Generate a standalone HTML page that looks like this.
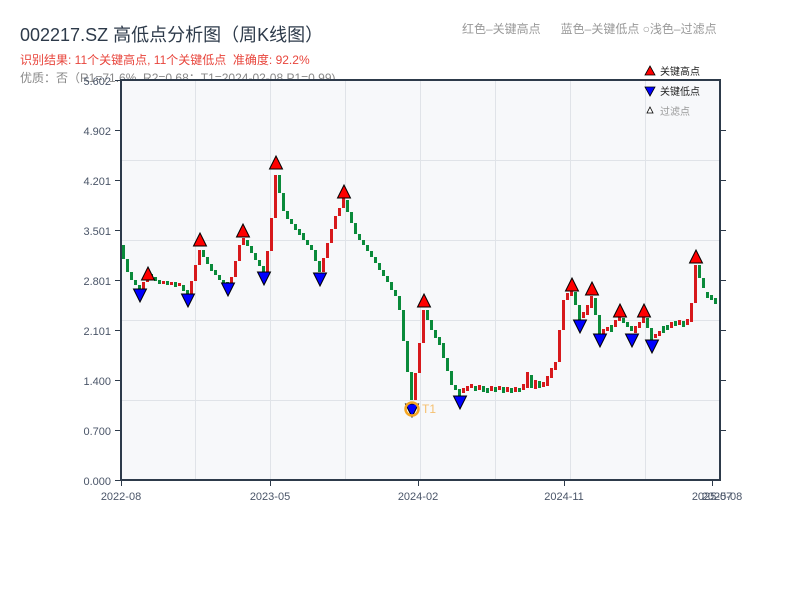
<!DOCTYPE html>
<html><head><meta charset="utf-8">
<style>
body{margin:0;background:#fff;width:800px;height:600px;overflow:hidden;font-family:"Liberation Sans","Noto Sans CJK SC",sans-serif;}
.t{position:absolute;white-space:nowrap}
.r{fill:#d7191c}.g{fill:#0a8a3a}
</style></head><body>
<div class="t" style="left:20px;top:21px;font-size:18px;color:#2d3a4a">002217.SZ 高低点分析图（周K线图）</div>
<div class="t" style="left:20px;top:51px;font-size:12px;color:#e8453c">识别结果: 11个关键高点, 11个关键低点&nbsp;&nbsp;准确度: 92.2%</div>
<div class="t" style="left:20px;top:69px;font-size:12px;color:#888">优质：否（R1=71.6%, R2=0.68；T1=2024-02-08 P1=0.99)</div>
<div class="t" style="left:462px;top:20px;font-size:12px;color:#999">红色–关键高点&nbsp;&nbsp;&nbsp;&nbsp;&nbsp;&nbsp;蓝色–关键低点 ○浅色–过滤点</div>
<svg width="800" height="600" style="position:absolute;left:0;top:0" xmlns="http://www.w3.org/2000/svg" font-family="Liberation Sans, Noto Sans CJK SC, sans-serif">
<rect x="121" y="80" width="599" height="400" fill="#f7f8fa"/>
<g stroke="#e0e3e8" stroke-width="1">
<line x1="121" x2="720" y1="160.5" y2="160.5"/><line x1="121" x2="720" y1="240.5" y2="240.5"/><line x1="121" x2="720" y1="320.5" y2="320.5"/><line x1="121" x2="720" y1="400.5" y2="400.5"/>
<line x1="195.5" x2="195.5" y1="80" y2="480"/><line x1="270.5" x2="270.5" y1="80" y2="480"/><line x1="345.5" x2="345.5" y1="80" y2="480"/><line x1="420.5" x2="420.5" y1="80" y2="480"/><line x1="495.5" x2="495.5" y1="80" y2="480"/><line x1="570.5" x2="570.5" y1="80" y2="480"/><line x1="645.5" x2="645.5" y1="80" y2="480"/>
</g>
<g>
<rect class="g" x="122" y="245" width="3" height="14"/>
<rect class="g" x="126" y="259" width="3" height="13"/>
<rect class="g" x="130" y="272" width="3" height="8"/>
<rect class="g" x="134" y="280" width="3" height="5"/>
<rect class="g" x="138" y="285" width="3" height="5"/>
<rect class="r" x="142" y="282" width="3" height="8"/>
<rect class="r" x="146" y="274" width="3" height="8"/>
<rect class="g" x="150" y="274" width="3" height="5"/>
<rect class="g" x="154" y="277" width="3" height="4"/>
<rect class="g" x="158" y="280" width="3" height="4"/>
<rect class="r" x="162" y="281" width="3" height="3"/>
<rect class="g" x="166" y="281" width="3" height="4"/>
<rect class="r" x="170" y="282" width="3" height="3"/>
<rect class="g" x="174" y="282" width="3" height="5"/>
<rect class="r" x="178" y="283" width="3" height="3"/>
<rect class="g" x="182" y="285" width="3" height="6"/>
<rect class="g" x="186" y="290" width="3" height="7"/>
<rect class="r" x="190" y="281" width="3" height="15"/>
<rect class="r" x="194" y="265" width="3" height="16"/>
<rect class="r" x="198" y="250" width="3" height="15"/>
<rect class="g" x="202" y="250" width="3" height="7"/>
<rect class="g" x="206" y="257" width="3" height="7"/>
<rect class="g" x="210" y="264" width="3" height="7"/>
<rect class="g" x="214" y="270" width="3" height="5"/>
<rect class="g" x="218" y="275" width="3" height="5"/>
<rect class="g" x="222" y="280" width="3" height="3"/>
<rect class="g" x="226" y="282" width="3" height="5"/>
<rect class="r" x="230" y="277" width="3" height="8"/>
<rect class="r" x="234" y="261" width="3" height="16"/>
<rect class="r" x="238" y="245" width="3" height="16"/>
<rect class="r" x="242" y="238" width="3" height="7"/>
<rect class="g" x="246" y="240" width="3" height="6"/>
<rect class="g" x="250" y="246" width="3" height="7"/>
<rect class="g" x="254" y="253" width="3" height="7"/>
<rect class="g" x="258" y="260" width="3" height="6"/>
<rect class="g" x="262" y="266" width="3" height="7"/>
<rect class="r" x="266" y="251" width="3" height="22"/>
<rect class="r" x="270" y="218" width="3" height="33"/>
<rect class="r" x="274" y="175" width="3" height="43"/>
<rect class="g" x="278" y="175" width="3" height="18"/>
<rect class="g" x="282" y="193" width="3" height="18"/>
<rect class="g" x="286" y="211" width="3" height="8"/>
<rect class="g" x="290" y="219" width="3" height="5"/>
<rect class="g" x="294" y="224" width="3" height="6"/>
<rect class="g" x="298" y="229" width="3" height="6"/>
<rect class="g" x="302" y="233" width="3" height="7"/>
<rect class="g" x="306" y="240" width="3" height="5"/>
<rect class="g" x="310" y="245" width="3" height="5"/>
<rect class="g" x="314" y="250" width="3" height="11"/>
<rect class="g" x="318" y="261" width="3" height="11"/>
<rect class="r" x="322" y="258" width="3" height="14"/>
<rect class="r" x="326" y="243" width="3" height="15"/>
<rect class="r" x="330" y="229" width="3" height="14"/>
<rect class="r" x="334" y="216" width="3" height="13"/>
<rect class="r" x="338" y="208" width="3" height="8"/>
<rect class="r" x="342" y="198" width="3" height="10"/>
<rect class="g" x="346" y="200" width="3" height="12"/>
<rect class="g" x="350" y="212" width="3" height="11"/>
<rect class="g" x="354" y="223" width="3" height="11"/>
<rect class="g" x="358" y="234" width="3" height="6"/>
<rect class="g" x="362" y="240" width="3" height="5"/>
<rect class="g" x="366" y="245" width="3" height="6"/>
<rect class="g" x="370" y="251" width="3" height="6"/>
<rect class="g" x="374" y="257" width="3" height="6"/>
<rect class="g" x="378" y="263" width="3" height="7"/>
<rect class="g" x="382" y="270" width="3" height="6"/>
<rect class="g" x="386" y="276" width="3" height="6"/>
<rect class="g" x="390" y="282" width="3" height="8"/>
<rect class="g" x="394" y="290" width="3" height="6"/>
<rect class="g" x="398" y="296" width="3" height="14"/>
<rect class="g" x="402" y="310" width="3" height="31"/>
<rect class="g" x="406" y="341" width="3" height="31"/>
<rect class="g" x="410" y="372" width="3" height="28"/>
<rect class="r" x="414" y="373" width="3" height="27"/>
<rect class="r" x="418" y="343" width="3" height="30"/>
<rect class="r" x="422" y="310" width="3" height="33"/>
<rect class="g" x="426" y="310" width="3" height="10"/>
<rect class="g" x="430" y="320" width="3" height="10"/>
<rect class="g" x="434" y="330" width="3" height="8"/>
<rect class="g" x="438" y="337" width="3" height="8"/>
<rect class="g" x="442" y="343" width="3" height="15"/>
<rect class="g" x="446" y="358" width="3" height="13"/>
<rect class="g" x="450" y="371" width="3" height="14"/>
<rect class="g" x="454" y="385" width="3" height="5"/>
<rect class="g" x="458" y="389" width="3" height="7"/>
<rect class="r" x="462" y="388" width="3" height="5"/>
<rect class="r" x="466" y="386" width="3" height="5"/>
<rect class="r" x="470" y="384" width="3" height="4"/>
<rect class="g" x="474" y="386" width="3" height="5"/>
<rect class="r" x="478" y="385" width="3" height="5"/>
<rect class="g" x="482" y="386" width="3" height="6"/>
<rect class="g" x="486" y="388" width="3" height="5"/>
<rect class="r" x="490" y="386" width="3" height="5"/>
<rect class="g" x="494" y="387" width="3" height="5"/>
<rect class="r" x="498" y="386" width="3" height="4"/>
<rect class="g" x="502" y="387" width="3" height="6"/>
<rect class="r" x="506" y="387" width="3" height="5"/>
<rect class="g" x="510" y="388" width="3" height="5"/>
<rect class="r" x="514" y="387" width="3" height="5"/>
<rect class="g" x="518" y="388" width="3" height="4"/>
<rect class="r" x="522" y="384" width="3" height="6"/>
<rect class="r" x="526" y="372" width="3" height="16"/>
<rect class="g" x="530" y="375" width="3" height="13"/>
<rect class="r" x="534" y="380" width="3" height="9"/>
<rect class="g" x="538" y="381" width="3" height="7"/>
<rect class="r" x="542" y="382" width="3" height="5"/>
<rect class="r" x="546" y="376" width="3" height="10"/>
<rect class="r" x="550" y="368" width="3" height="10"/>
<rect class="r" x="554" y="362" width="3" height="8"/>
<rect class="r" x="558" y="330" width="3" height="32"/>
<rect class="r" x="562" y="300" width="3" height="30"/>
<rect class="r" x="566" y="293" width="3" height="7"/>
<rect class="r" x="570" y="290" width="3" height="6"/>
<rect class="g" x="574" y="292" width="3" height="13"/>
<rect class="g" x="578" y="305" width="3" height="15"/>
<rect class="r" x="582" y="312" width="3" height="6"/>
<rect class="r" x="586" y="305" width="3" height="10"/>
<rect class="r" x="590" y="296" width="3" height="12"/>
<rect class="g" x="594" y="298" width="3" height="17"/>
<rect class="g" x="598" y="315" width="3" height="19"/>
<rect class="r" x="602" y="329" width="3" height="5"/>
<rect class="r" x="606" y="327" width="3" height="4"/>
<rect class="g" x="610" y="325" width="3" height="7"/>
<rect class="r" x="614" y="320" width="3" height="7"/>
<rect class="r" x="618" y="316" width="3" height="5"/>
<rect class="g" x="622" y="318" width="3" height="5"/>
<rect class="g" x="626" y="322" width="3" height="5"/>
<rect class="g" x="630" y="326" width="3" height="5"/>
<rect class="r" x="634" y="326" width="3" height="7"/>
<rect class="r" x="638" y="322" width="3" height="6"/>
<rect class="r" x="642" y="316" width="3" height="7"/>
<rect class="g" x="646" y="318" width="3" height="10"/>
<rect class="g" x="650" y="328" width="3" height="12"/>
<rect class="r" x="654" y="334" width="3" height="4"/>
<rect class="r" x="658" y="331" width="3" height="5"/>
<rect class="g" x="662" y="326" width="3" height="7"/>
<rect class="g" x="666" y="325" width="3" height="5"/>
<rect class="r" x="670" y="322" width="3" height="6"/>
<rect class="g" x="674" y="321" width="3" height="5"/>
<rect class="r" x="678" y="320" width="3" height="5"/>
<rect class="g" x="682" y="321" width="3" height="6"/>
<rect class="r" x="686" y="319" width="3" height="6"/>
<rect class="r" x="690" y="303" width="3" height="19"/>
<rect class="r" x="694" y="265" width="3" height="38"/>
<rect class="g" x="698" y="265" width="3" height="13"/>
<rect class="g" x="702" y="278" width="3" height="10"/>
<rect class="g" x="706" y="292" width="3" height="6"/>
<rect class="g" x="710" y="295" width="3" height="5"/>
<rect class="g" x="714" y="298" width="3" height="6"/>
</g>
<g stroke="#2d3a4a" stroke-width="2" fill="none">
<line x1="121" y1="79" x2="121" y2="481"/><line x1="720" y1="79" x2="720" y2="481"/><line x1="120" y1="80" x2="721" y2="80"/><line x1="120" y1="480" x2="721" y2="480"/>
</g>
<g stroke="#2d3a4a" stroke-width="1">
<line x1="115" x2="121" y1="80.5" y2="80.5"/><line x1="115" x2="121" y1="130.5" y2="130.5"/><line x1="115" x2="121" y1="180.5" y2="180.5"/><line x1="115" x2="121" y1="230.5" y2="230.5"/><line x1="115" x2="121" y1="280.5" y2="280.5"/><line x1="115" x2="121" y1="330.5" y2="330.5"/><line x1="115" x2="121" y1="380.5" y2="380.5"/><line x1="115" x2="121" y1="430.5" y2="430.5"/><line x1="115" x2="121" y1="480.5" y2="480.5"/>
<line x1="720" x2="726" y1="130.5" y2="130.5"/><line x1="720" x2="726" y1="180.5" y2="180.5"/><line x1="720" x2="726" y1="230.5" y2="230.5"/><line x1="720" x2="726" y1="280.5" y2="280.5"/><line x1="720" x2="726" y1="330.5" y2="330.5"/><line x1="720" x2="726" y1="380.5" y2="380.5"/><line x1="720" x2="726" y1="430.5" y2="430.5"/>
<line x1="121.5" x2="121.5" y1="480" y2="486"/><line x1="270.5" x2="270.5" y1="480" y2="486"/><line x1="418.5" x2="418.5" y1="480" y2="486"/><line x1="564.5" x2="564.5" y1="480" y2="486"/><line x1="712.5" x2="712.5" y1="480" y2="486"/>
</g>
<g font-size="11" fill="#4a5568" text-anchor="end">
<text x="111" y="85">5.602</text><text x="111" y="135">4.902</text><text x="111" y="185">4.201</text><text x="111" y="235">3.501</text><text x="111" y="285">2.801</text><text x="111" y="335">2.101</text><text x="111" y="385">1.400</text><text x="111" y="435">0.700</text><text x="111" y="485">0.000</text>
</g>
<g font-size="11" fill="#4a5568" text-anchor="middle">
<text x="121" y="500">2022-08</text><text x="270" y="500">2023-05</text><text x="418" y="500">2024-02</text><text x="564" y="500">2024-11</text><text x="712" y="500">2025-07</text><text x="722" y="500">2025-08</text>
</g>
<g stroke="#000" stroke-width="1" fill="#f00">
<polygon points="148,267 154.5,280 141.5,280"/>
<polygon points="200,233 206.5,246 193.5,246"/>
<polygon points="243,224 249.5,237 236.5,237"/>
<polygon points="276,156 282.5,169 269.5,169"/>
<polygon points="344,185 350.5,198 337.5,198"/>
<polygon points="424,294 430.5,307 417.5,307"/>
<polygon points="572,278 578.5,291 565.5,291"/>
<polygon points="592,282 598.5,295 585.5,295"/>
<polygon points="620,304 626.5,317 613.5,317"/>
<polygon points="644,304 650.5,317 637.5,317"/>
<polygon points="696,250 702.5,263 689.5,263"/>
</g>
<g stroke="#000" stroke-width="1" fill="#00f">
<polygon points="133.5,289 146.5,289 140,302"/>
<polygon points="181.5,294 194.5,294 188,307"/>
<polygon points="221.5,283 234.5,283 228,296"/>
<polygon points="257.5,272 270.5,272 264,285"/>
<polygon points="313.5,273 326.5,273 320,286"/>
<polygon points="405.5,404 418.5,404 412,417"/>
<polygon points="453.5,396 466.5,396 460,409"/>
<polygon points="573.5,320 586.5,320 580,333"/>
<polygon points="593.5,334 606.5,334 600,347"/>
<polygon points="625.5,334 638.5,334 632,347"/>
<polygon points="645.5,340 658.5,340 652,353"/>
</g>
<circle cx="412" cy="409" r="6.5" fill="none" stroke="#f5a623" stroke-width="2.5"/>
<text x="422" y="413" font-size="12" fill="#f5c070">T1</text>
<g font-size="10" fill="#222">
<polygon points="650,66 655,75 645,75" fill="#f00" stroke="#000" stroke-width="0.8"/><text x="660" y="75">关键高点</text>
<polygon points="645,87 655,87 650,96" fill="#00f" stroke="#000" stroke-width="0.8"/><text x="660" y="95">关键低点</text>
<polygon points="650,107 653,113 647,113" fill="#fff" stroke="#000" stroke-width="0.8"/><text x="660" y="115" fill="#999">过滤点</text>
</g>
</svg>
</body></html>
